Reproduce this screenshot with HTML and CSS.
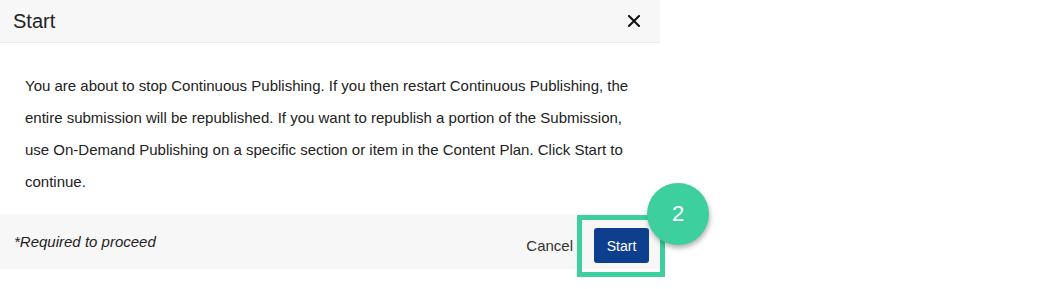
FILE: index.html
```html
<!DOCTYPE html>
<html>
<head>
<meta charset="utf-8">
<link rel="stylesheet" href="styles.css">
</head>
<body>
<div class="dialog">
  <div class="header">
    <span class="title">Start</span>
    <span class="close">
      <svg width="12" height="12" viewBox="0 0 12 12"><path d="M1 1L11 11M11 1L1 11" stroke="#111" stroke-width="2" stroke-linecap="square"/></svg>
    </span>
  </div>
  <div class="body">
    <p>You are about to stop Continuous Publishing. If you then restart Continuous Publishing, the entire submission will be republished. If you want to republish a portion of the Submission, use On-Demand Publishing on a specific section or item in the Content Plan. Click Start to continue.</p>
  </div>
  <div class="footer">
    <span class="required">*Required to proceed</span>
    <div class="actions">
      <span class="cancel">Cancel</span>
      <button class="start">Start</button>
    </div>
  </div>
  <div class="highlight"></div>
  <div class="step">2</div>
</div>
</body>
</html>
```
FILE: styles.css
```css
html, body {
  margin: 0;
  padding: 0;
  background: #ffffff;
}
body {
  font-family: "Liberation Sans", Arial, sans-serif;
  color: #222222;
  min-height: 289px;
}
.dialog {
  position: relative;
  width: 660px;
}
.header {
  height: 42px;
  background: #f7f7f7;
  border-bottom: 1px solid #ececec;
  display: flex;
  align-items: center;
  justify-content: space-between;
  padding: 0 20px 0 13px;
}
.title {
  font-size: 20px;
  color: #222;
}
.close {
  display: flex;
  align-items: center;
}
.body {
  padding: 27px 22px 16px 25px;
}
.body p {
  margin: 0;
  font-size: 15px;
  line-height: 32px;
  color: #222;
}
.footer {
  height: 55px;
  background: #f7f7f7;
  display: flex;
  align-items: center;
  justify-content: space-between;
  padding: 0 11px 0 14px;
}
.required {
  font-style: italic;
  font-size: 15px;
  color: #222;
  margin-top: -1px;
}
.actions {
  display: flex;
  align-items: center;
  gap: 21px;
}
.cancel {
  font-size: 15px;
  color: #333;
  margin-top: 8px;
}
.start {
  width: 55px;
  height: 35px;
  border: none;
  border-radius: 3px;
  background: #0e3f8e;
  color: #fff;
  font-family: "Liberation Sans", Arial, sans-serif;
  font-size: 14px;
  padding: 0;
  margin-top: 8px;
}
.highlight {
  position: absolute;
  left: 577px;
  top: 215px;
  width: 88px;
  height: 62px;
  box-sizing: border-box;
  border: 5px solid #3ecf9e;
}
.step {
  position: absolute;
  left: 647px;
  top: 183px;
  width: 62px;
  height: 62px;
  border-radius: 50%;
  background: #3ecf9e;
  color: #fff;
  font-size: 22px;
  display: flex;
  align-items: center;
  justify-content: center;
  box-shadow: 1px 3px 5px rgba(0,0,0,0.3);
}
```
